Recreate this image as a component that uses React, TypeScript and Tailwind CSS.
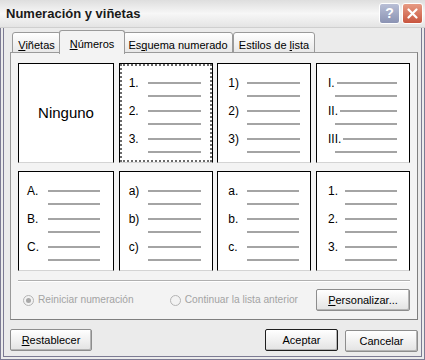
import React from "react";

type Spec = {
  labels: string[];
  pad: string;
  labelW: string;
  lineW: string;
  subCls: string;
};

const row1: Spec[] = [
  { labels: ["1.", "2.", "3."], pad: "pl-[9px]", labelW: "w-[19px]", lineW: "w-[53px]", subCls: "ml-[19px] w-[53px]" },
  { labels: ["1)", "2)", "3)"], pad: "pl-[10px]", labelW: "w-[19px]", lineW: "w-[53px]", subCls: "ml-[19px] w-[53px]" },
  { labels: ["I.", "II.", "III."], pad: "pl-[11px] pr-[12px]", labelW: "", lineW: "flex-1 ml-[2px]", subCls: "ml-[7px] flex-1" },
];

const row2: Spec[] = [
  { labels: ["A.", "B.", "C."], pad: "pl-[8px]", labelW: "w-[21px]", lineW: "w-[52px]", subCls: "ml-[21px] w-[52px]" },
  { labels: ["a)", "b)", "c)"], pad: "pl-[9px]", labelW: "w-[19px]", lineW: "w-[53px]", subCls: "ml-[19px] w-[53px]" },
  { labels: ["a.", "b.", "c."], pad: "pl-[10px]", labelW: "w-[19px]", lineW: "w-[52px]", subCls: "ml-[19px] w-[52px]" },
  { labels: ["1.", "2.", "3."], pad: "pl-[11px]", labelW: "w-[17px]", lineW: "w-[52px]", subCls: "ml-[17px] w-[52px]" },
];

function ListCell({ spec, selected }: { spec: Spec; selected?: boolean }) {
  return (
    <div
      className={`h-[100px] bg-white border border-black border-b-[#d4d4d4] pt-[12px] ${spec.pad} ${
        selected ? "outline-2 outline-dotted outline-[#6b6b6b] -outline-offset-3" : ""
      }`}
    >
      <div className="flex flex-col gap-[2px]">
        {spec.labels.map((l) => (
          <div key={l} className="flex flex-col">
            <div className="h-[13px] flex items-center">
              <span className={`text-[12px] leading-none text-black shrink-0 ${spec.labelW}`}>{l}</span>
              <div className={`h-[2px] bg-[#a4a4a4] ${spec.lineW}`} />
            </div>
            <div className="h-[13px] flex items-center">
              <div className={`h-[2px] bg-[#a4a4a4] ${spec.subCls}`} />
            </div>
          </div>
        ))}
      </div>
    </div>
  );
}

function Radio({ checked }: { checked?: boolean }) {
  return (
    <span className="w-[11px] h-[11px] rounded-full border border-[#b4b4b4] bg-[#f2f2f2] flex items-center justify-center shrink-0">
      {checked && <span className="w-[5px] h-[5px] rounded-full bg-[#a8a8a8]" />}
    </span>
  );
}

function Tab({ label, u, rest, selected, w }: { label: string; u: string; rest: string; selected?: boolean; w: string }) {
  return (
    <div
      className={`${w} flex justify-center rounded-t-[3px] border border-[#9a9a9a] text-[11px] text-black ${
        selected
          ? "h-[24px] -mx-[2px] z-10 bg-[#f3f3f3] border-b-0 pt-[5px]"
          : "h-[21px] mt-[2px] bg-gradient-to-b from-white to-[#e8e8e8] pt-[4px]"
      }`}
    >
      <span>
        {label}
        <span className="underline">{u}</span>
        {rest}
      </span>
    </div>
  );
}

function Btn({ children, w, isDefault }: { children: React.ReactNode; w: string; isDefault?: boolean }) {
  return (
    <button
      className={`${w} h-[22px] rounded-[2px] border text-[11px] text-black bg-gradient-to-b from-white to-[#e3e3e3] shadow-[inset_-1px_-1px_0_#b5b5b5] ${
        isDefault ? "border-[#1e1e1e]" : "border-[#8d8d8d]"
      }`}
    >
      {children}
    </button>
  );
}

export default function App() {
  return (
    <div className="w-[425px] h-[360px] bg-[#ebebeb] flex flex-col overflow-hidden font-['Liberation_Sans',Arial,sans-serif]">
      {/* title bar */}
      <div className="h-[28px] flex items-center justify-between pl-[6px] pr-[2px] bg-gradient-to-b from-[#dedede] via-[#f7f7f7] to-[#e4e4e4] border-b border-[#cfcfcf]">
        <span className="text-[13px] font-bold text-[#1a1a1a]">Numeración y viñetas</span>
        <div className="flex gap-[2px]">
          <div className="w-[21px] h-[21px] rounded-[3px] border border-white bg-gradient-to-b from-[#b9bfd6] to-[#8b93b3] flex items-center justify-center text-white font-bold text-[14px]">
            ?
          </div>
          <div className="w-[21px] h-[21px] rounded-[3px] border border-white bg-gradient-to-b from-[#e69a83] to-[#c8543e] flex items-center justify-center">
            <svg width="11" height="11" viewBox="0 0 11 11">
              <path d="M1.5 1.5 L9.5 9.5 M9.5 1.5 L1.5 9.5" stroke="white" strokeWidth="2.2" strokeLinecap="round" />
            </svg>
          </div>
        </div>
      </div>

      {/* body */}
      <div className="flex-1 flex flex-col border-x-[4px] border-b-[4px] border-double border-[#7c7b93] pl-[6px] pr-[3px]">
        {/* tabs */}
        <div className="flex pt-[2px] pl-[2px] h-[25px]">
          <Tab label="" u="V" rest="iñetas" w="w-[49px]" />
          <Tab label="" u="N" rest="úmeros" w="w-[66px]" selected />
          <Tab label="Es" u="q" rest="uema numerado" w="w-[110px]" />
          <Tab label="Estilos de " u="l" rest="ista" w="w-[82px]" />
        </div>

        {/* panel */}
        <div className="h-[268px] -mt-[1px] border border-[#9a9a9a] border-r-[#7f7f7f] border-b-[#7f7f7f] bg-[#f3f3f3] flex flex-col px-[7px] pt-[10px]">
          <div className="pb-[9px] border-b border-[#b0b0b0] shadow-[0_1px_0_white]">
            <div className="grid grid-cols-[96px_94px_94px_94px] justify-between gap-y-[8px]">
              <div className="h-[100px] bg-white border border-black border-b-[#d4d4d4] flex items-center justify-center text-[15px] text-black">
                Ninguno
              </div>
              <ListCell spec={row1[0]} selected />
              <ListCell spec={row1[1]} />
              <ListCell spec={row1[2]} />
              {row2.map((s, i) => (
                <ListCell key={i} spec={s} />
              ))}
            </div>
          </div>

          <div className="flex items-center mt-[8px] pl-[5px] text-[10.2px] text-[#a3a3a3]">
            <Radio checked />
            <span className="ml-[4px]">Reiniciar numeración</span>
            <span className="ml-[36px]">
              <Radio />
            </span>
            <span className="ml-[4px]">Continuar la lista anterior</span>
            <span className="ml-auto">
              <Btn w="w-[94px]">
                <span className="underline">P</span>ersonalizar...
              </Btn>
            </span>
          </div>
        </div>

        {/* bottom buttons */}
        <div className="flex items-center mt-[8px]">
          <Btn w="w-[82px]">
            <span className="underline">R</span>establecer
          </Btn>
          <span className="ml-auto" />
          <Btn w="w-[73px]" isDefault>
            Aceptar
          </Btn>
          <span className="ml-[7px]">
            <Btn w="w-[73px]">Cancelar</Btn>
          </span>
        </div>
      </div>
    </div>
  );
}
